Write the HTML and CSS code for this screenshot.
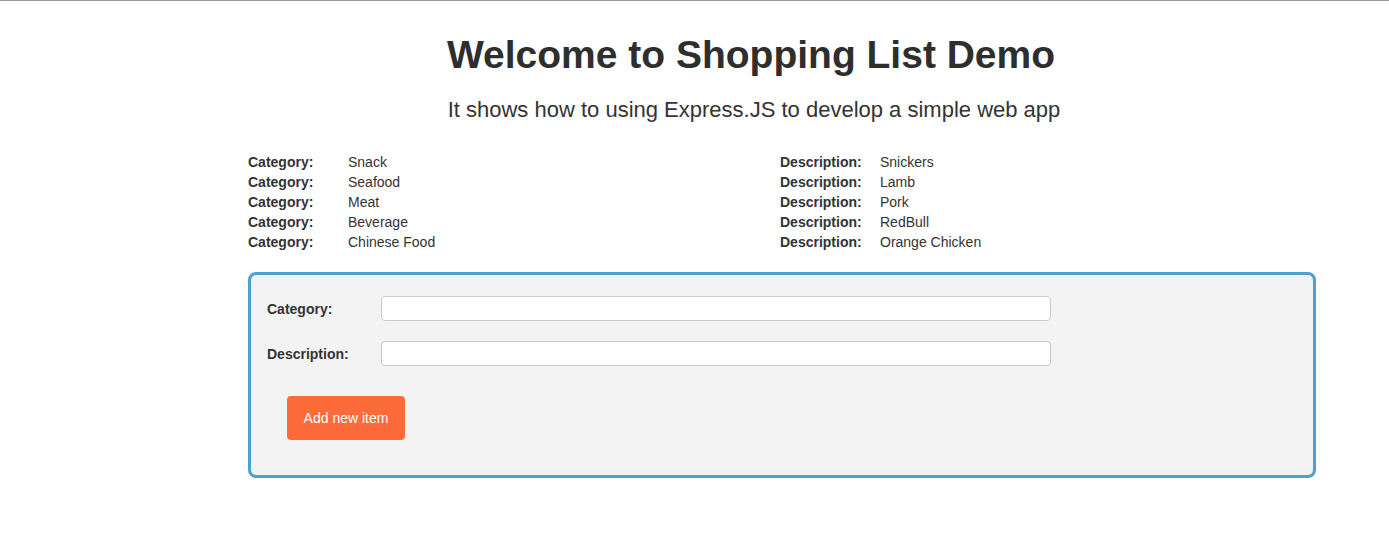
FILE: index.html
```html
<!DOCTYPE html>
<html>
<head>
<meta charset="utf-8">
<title>Shopping List Demo</title>
<link rel="stylesheet" href="styles.css">
</head>
<body>
<div class="page">
  <header class="hero">
    <h1 class="title">Welcome to Shopping List Demo</h1>
    <p class="subtitle">It shows how to using Express.JS to develop a simple web app</p>
  </header>
  <main class="content">
    <ul class="items">
      <li class="item"><span class="cell"><b class="key">Category:</b><span class="val">Snack</span></span><span class="cell"><b class="key">Description:</b><span class="val">Snickers</span></span></li>
      <li class="item"><span class="cell"><b class="key">Category:</b><span class="val">Seafood</span></span><span class="cell"><b class="key">Description:</b><span class="val">Lamb</span></span></li>
      <li class="item"><span class="cell"><b class="key">Category:</b><span class="val">Meat</span></span><span class="cell"><b class="key">Description:</b><span class="val">Pork</span></span></li>
      <li class="item"><span class="cell"><b class="key">Category:</b><span class="val">Beverage</span></span><span class="cell"><b class="key">Description:</b><span class="val">RedBull</span></span></li>
      <li class="item"><span class="cell"><b class="key">Category:</b><span class="val">Chinese Food</span></span><span class="cell"><b class="key">Description:</b><span class="val">Orange Chicken</span></span></li>
    </ul>
    <form class="form">
      <div class="field">
        <label class="label" for="cat">Category:</label>
        <input class="input" id="cat" type="text">
      </div>
      <div class="field">
        <label class="label" for="desc">Description:</label>
        <input class="input" id="desc" type="text">
      </div>
      <div class="actions">
        <button class="btn" type="button">Add new item</button>
      </div>
    </form>
  </main>
</div>
</body>
</html>
```
FILE: styles.css
```css
html, body {
  margin: 0;
  padding: 0;
  background: #fff;
}
body {
  font-family: "Liberation Sans", Arial, sans-serif;
  color: #333;
  font-size: 14px;
  border-top: 1px solid #9a9a9a;
}
.page {
  padding-top: 1px;
}
.hero {
  margin-left: 113px;
  text-align: center;
}
.title {
  margin: 30px 0 0;
  font-size: 39px;
  line-height: 45px;
  font-weight: bold;
  color: #2e2e2e;
}
.subtitle {
  margin: 19px 0 0;
  padding-left: 6px;
  font-size: 22px;
  line-height: 28px;
  color: #333;
}
.content {
  margin-left: 248px;
  width: 1068px;
}
.items {
  list-style: none;
  margin: 28px 0 0;
  padding: 0;
}
.item {
  display: grid;
  grid-template-columns: 532px 1fr;
  line-height: 20px;
}
.cell {
  display: flex;
}
.key {
  width: 100px;
  font-weight: bold;
  color: #333;
}
.val {
  color: #333;
}
.form {
  margin-top: 20px;
  border: 3px solid #4f9fcf;
  border-radius: 8px;
  background: #f3f3f3;
  padding: 21px 16px 35px;
  display: flex;
  flex-direction: column;
  gap: 20px;
}
.field {
  display: flex;
  align-items: center;
}
.label {
  width: 114px;
  font-weight: bold;
  color: #333;
}
.input {
  box-sizing: border-box;
  width: 670px;
  height: 25px;
  margin: 0;
  border: 1px solid #ccc;
  border-radius: 4px;
  background: #fff;
  font: 14px "Liberation Sans", Arial, sans-serif;
  padding: 2px 4px;
}
.actions {
  padding: 10px 0 0 20px;
}
.btn {
  width: 118px;
  height: 44px;
  border: none;
  border-radius: 4px;
  background: #fd6b3b;
  color: #fff;
  font: 14px "Liberation Sans", Arial, sans-serif;
  padding: 0;
}
```
